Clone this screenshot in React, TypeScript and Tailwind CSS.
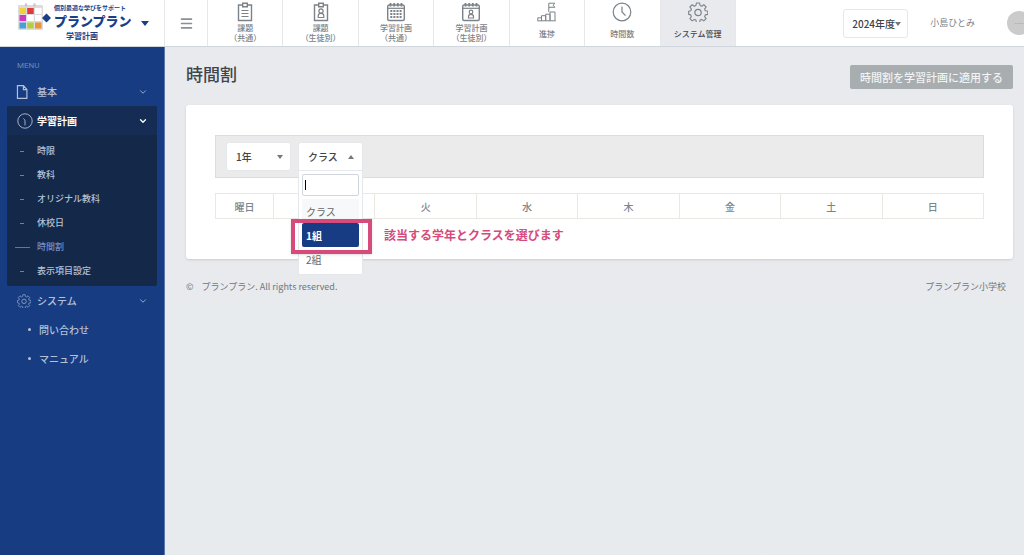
import { useState } from 'react';
import type { ReactNode } from 'react';
import { ChevronDown, Menu } from 'lucide-react';
import { clsx } from 'clsx';

const DAYS = ['月', '火', '水', '木', '金', '土', '日'];

const SUB_ITEMS = ['時限', '教科', 'オリジナル教科', '休校日', '時間割', '表示項目設定'];

const LINKS = ['問い合わせ', 'マニュアル'];

const CLASS_OPTIONS = ['クラス', '1組', '2組'];

function Icon({ size = 20, className, children }: { size?: number; className?: string; children: ReactNode }) {
  return (
    <svg
      width={size}
      height={size}
      viewBox="0 0 20 20"
      fill="none"
      stroke="currentColor"
      strokeWidth="1.2"
      className={clsx('shrink-0', className)}
      aria-hidden="true"
    >
      {children}
    </svg>
  );
}

const ClipboardIcon = () => (
  <Icon>
    <path d="M7.5 3H3.5v15.5h13V3h-4" strokeWidth="1.4" />
    <path d="M7.7 1.2h4.6v3.6H7.7z" strokeWidth="1.4" />
    <path d="M6.5 8.5h7M6.5 11.5h7M6.5 14.5h7" />
  </Icon>
);

const ClipboardUserIcon = () => (
  <Icon>
    <path d="M7.5 3H3.5v15.5h13V3h-4" strokeWidth="1.4" />
    <path d="M7.7 1.2h4.6v3.6H7.7z" strokeWidth="1.4" />
    <circle cx="10" cy="9" r="2.1" />
    <path d="M7.2 15.5v-1.7c0-1.5 1-2.4 2.8-2.4s2.8.9 2.8 2.4v1.7z" />
  </Icon>
);

const CalendarIcon = () => (
  <Icon>
    <rect x="1.7" y="3" width="16.6" height="15.5" rx="1.5" strokeWidth="1.4" />
    <path d="M2 6.3h16" />
    <path d="M4.5 1v3.5M8.2 1v3.5M11.8 1v3.5M15.5 1v3.5" strokeWidth="1.8" />
    <path d="M4.3 9h11.4M4.3 12h11.4M4.3 15h11.4" strokeWidth="2" strokeDasharray="2 1.1" />
  </Icon>
);

const CalendarUserIcon = () => (
  <Icon>
    <rect x="1.7" y="3" width="16.6" height="15.5" rx="1.5" strokeWidth="1.4" />
    <path d="M2 6.3h16" />
    <path d="M4.5 1v3.5M8.2 1v3.5M11.8 1v3.5M15.5 1v3.5" strokeWidth="1.8" />
    <circle cx="10" cy="10" r="1.8" />
    <path d="M7.5 16v-1.5c0-1.4.9-2.2 2.5-2.2s2.5.8 2.5 2.2V16z" />
  </Icon>
);

const StepsIcon = () => (
  <Icon>
    <path d="M.8 18.7v-2.9h3.7v2.9M4.5 18.7v-5h4.2v5M8.7 18.7v-6.5h4.3v6.5M13 18.7V10h5v8.7" strokeWidth="1" />
    <path d="M.3 18.8h18.4" strokeWidth="1" />
    <path d="M11.8 10V1.2h6l-1.6 2 1.6 2.1h-6" strokeWidth="1" />
  </Icon>
);

const ClockIcon = () => (
  <Icon>
    <circle cx="10" cy="10" r="8.8" />
    <path d="M10 4.5V10l3.5 3.7" />
  </Icon>
);

const GearIcon = ({ size = 20, className }: { size?: number; className?: string }) => (
  <Icon size={size} className={className}>
    <path
      d="M8.4 1h3.2l.5 2.5 1.6.7 2.1-1.5 2.3 2.3-1.5 2.1.7 1.6 2.5.5v3.2l-2.5.5-.7 1.6 1.5 2.1-2.3 2.3-2.1-1.5-1.6.7-.5 2.5H8.4l-.5-2.5-1.6-.7-2.1 1.500-2.300-2.300 1.500-2.100-.700-1.600L.7 12.400V9.200l2-.500.700-1.600L1.900 5l2.300-2.300 2.100 1.500 1.600-.700z"
      strokeLinejoin="round"
      strokeWidth="1.1"
    />
    <circle cx="10" cy="10.500" r="3.200" />
  </Icon>
);

const TABS = [
  { lines: ['課題', '（共通）'], icon: ClipboardIcon },
  { lines: ['課題', '（生徒別）'], icon: ClipboardUserIcon },
  { lines: ['学習計画', '（共通）'], icon: CalendarIcon },
  { lines: ['学習計画', '（生徒別）'], icon: CalendarUserIcon },
  { lines: ['進捗'], icon: StepsIcon },
  { lines: ['時間数'], icon: ClockIcon },
  { lines: ['システム管理'], icon: GearIcon },
];

function Caret({ up, className }: { up?: boolean; className?: string }) {
  return (
    <svg width="6" height="4" viewBox="0 0 6 4" className={className} aria-hidden="true">
      <path d={up ? 'M0 4h6L3 0z' : 'M0 0h6L3 4z'} fill="currentColor" />
    </svg>
  );
}

function Logo() {
  return (
    <a href="#" className="flex h-full w-[165px] shrink-0 items-start border-r border-gray-200 pl-[18px] text-[#1a3f87]">
      <svg width="33" height="31" viewBox="0 0 33 31" className="mt-[2px] shrink-0" aria-hidden="true">
        <rect x="0" y="3" width="25" height="25" rx="1" fill="#dcdcde" />
        <g fill="#fff">
          <rect x="17" y="6" width="6.5" height="6" />
          <rect x="9.2" y="13" width="6.5" height="6" />
          <rect x="17" y="13" width="6.5" height="6" />
        </g>
        <rect x="1.5" y="6" width="6.5" height="6" fill="#f2d03e" />
        <rect x="9.2" y="6" width="6.5" height="6" fill="#df3b3b" />
        <rect x="1.5" y="13" width="6.5" height="6" fill="#cf38c0" />
        <rect x="1.5" y="20.5" width="6.5" height="6" fill="#4a9fd8" />
        <rect x="9.2" y="20.5" width="6.5" height="6" fill="#b4cf3c" />
        <rect x="17" y="20.5" width="6.5" height="6" fill="#ec9238" />
        <path d="M8 2.500v1M16.500 2.500v1" stroke="#c9c9cc" strokeWidth="2.5" strokeLinecap="round" />
        <path d="M28.500 11.500 33 16l-4.500 4.500L24 16z" fill="#1a3f87" />
      </svg>
      <span className="flex flex-col pl-[3px] pt-1 font-bold">
        <span className="text-[6px] leading-[8px]">個別最適な学びをサポート</span>
        <span className="text-[13px] font-black leading-[18px]">プランプラン</span>
        <span className="pl-3 text-[8px] leading-[12px]">学習計画</span>
      </span>
      <svg width="8" height="5" viewBox="0 0 8 5" className="ml-[9px] mt-[21px] shrink-0" aria-hidden="true">
        <path d="M0 0h8L4 5z" fill="currentColor" />
      </svg>
    </a>
  );
}

function Header() {
  return (
    <header className="relative z-10 flex h-[47px] items-center overflow-hidden border-b border-gray-300 bg-white text-[#7b8288]">
      <Logo />
      <button type="button" aria-label="メニュー" className="flex h-full w-[42px] shrink-0 items-center justify-center">
        <Menu size={15} strokeWidth={2.5} className="text-[#8a9096]" />
      </button>
      <nav className="flex h-full w-[529px] shrink-0">
        {TABS.map(({ lines, icon: TabIcon }, i) => {
          const active = i === TABS.length - 1;
          return (
            <a
              key={lines.join('')}
              href="#"
              className={clsx(
                'flex flex-1 flex-col items-center border-l border-gray-200 pt-[2px]',
                active && 'border-r bg-[#e9eaee]'
              )}
            >
              <TabIcon />
              <span
                className={clsx(
                  'flex flex-1 flex-col items-center text-[8px] font-medium leading-[10px]',
                  lines.length === 1 ? 'pt-[7px]' : 'pt-[1px]',
                  active && 'font-bold text-[#454b52]'
                )}
              >
                {lines.map((line) => (
                  <span key={line}>{line}</span>
                ))}
              </span>
            </a>
          );
        })}
      </nav>
      <div className="-mr-[7px] ml-auto flex shrink-0 items-center">
        <div className="relative">
          <select
            aria-label="年度"
            className="h-[29px] w-[65px] appearance-none rounded-[3px] border border-gray-200 bg-white pl-2 text-[10px] font-medium text-[#3c4248]"
          >
            <option>2024年度</option>
          </select>
          <Caret className="pointer-events-none absolute right-[7px] top-[13px] text-[#777]" />
        </div>
        <span className="ml-[22px] text-[9px]">小島ひとみ</span>
        <span className="ml-[32px] flex size-6 items-center justify-center rounded-full bg-[#cbcbcb] text-[9px] text-[#aaa]">---</span>
      </div>
    </header>
  );
}

function Sidebar() {
  return (
    <aside className="w-[165px] shrink-0 border-r border-[#5d78ad] bg-[#183c82] text-[10px] font-medium text-[#b5c0d5]">
      <p className="flex h-[30px] items-center pl-[17px] pt-2 font-['Roboto'] text-[8px] font-normal text-[#7187b2]">MENU</p>
      <nav>
        <a href="#" className="flex h-[29px] items-center pl-[15px] pr-4">
          <Icon size={14}>
            <path d="M3.5 1h8.500l5 5.500V19h-13.500zM12 1v5.500h5" strokeWidth="1.7" />
          </Icon>
          <span className="flex-1 pl-2">基本</span>
          <ChevronDown size={10} />
        </a>
        <div className="mx-[7px] rounded-[2px] bg-[#142849]">
          <a href="#" className="flex h-[29px] items-center bg-[#152d55] pl-[10px] pr-[9px] font-bold text-white">
            <Icon size={16} className="text-[#aab6ca]">
              <circle cx="10" cy="10" r="9" />
              <path d="M8 7l2 2v6.5" />
            </Icon>
            <span className="flex-1 pl-1">学習計画</span>
            <ChevronDown size={10} strokeWidth={3} />
          </a>
          <ul className="pb-[3px] pt-1 text-[9px]">
            {SUB_ITEMS.map((item) => {
              const current = item === '時間割';
              return (
                <li key={item}>
                  <a href="#" className={clsx('flex h-6 items-center', current && 'text-[#748dc4]')}>
                    <span className="flex w-[30px] justify-center">
                      <span className={clsx('h-px', current ? 'w-[15px] bg-[#5f76a8]' : 'w-1 bg-[#70809d]')} />
                    </span>
                    {item}
                  </a>
                </li>
              );
            })}
          </ul>
        </div>
        <a href="#" className="flex h-[29px] items-center pl-[17px] pr-4">
          <GearIcon size={14} className="text-[#8fa1c4]" />
          <span className="flex-1 pl-[6px]">システム</span>
          <ChevronDown size={10} />
        </a>
        {LINKS.map((item) => (
          <a key={item} href="#" className="flex h-[29px] items-center gap-2 pl-7">
            <span className="size-[3px] rounded-full bg-[#b5c0d5]" />
            {item}
          </a>
        ))}
      </nav>
    </aside>
  );
}

function ClassSelect({ open, onOpenChange }: { open: boolean; onOpenChange: (open: boolean) => void }) {
  const [selected, setSelected] = useState('クラス');

  return (
    <div className="relative w-[65px]">
      <button
        type="button"
        aria-haspopup="listbox"
        aria-expanded={open}
        onClick={() => onOpenChange(!open)}
        className="flex h-[29px] w-full items-center justify-between rounded-t-[3px] border border-gray-200 bg-white pl-[9px] pr-2 text-[10px] font-medium text-[#444]"
      >
        {selected}
        <Caret up={open} className="text-[#777]" />
      </button>
      {open && (
        <div className="absolute inset-x-0 top-[28px] z-20 border border-gray-200 bg-white p-[3px] text-[10px] text-[#666]">
          <div className="relative">
            <input
              type="text"
              aria-label="クラスを検索"
              className="block h-[22px] w-full rounded-[2px] border border-gray-300 px-1 outline-none"
            />
            <span className="pointer-events-none absolute left-[3px] top-[6px] h-[10px] w-px bg-black" />
          </div>
          <ul role="listbox" aria-label="クラス" className="pt-[3px]">
            {CLASS_OPTIONS.map((option) => (
              <li
                key={option}
                role="option"
                aria-selected={option === selected}
                onClick={() => {
                  setSelected(option);
                  onOpenChange(false);
                }}
                className={clsx(
                  'relative flex h-6 items-center rounded-[2px] pl-1',
                  option === 'クラス' && 'bg-[#f7f8fa]',
                  option === '1組' && 'bg-[#173c84] font-bold text-white'
                )}
              >
                {option}
                {option === '1組' && (
                  <>
                    <span className="absolute -bottom-[7px] -left-[11px] -right-[13px] -top-1 border-4 border-[#d64a7c] shadow-sm" />
                    <span className="absolute left-full whitespace-nowrap pl-[25px] text-[12px] font-bold text-[#d64a7c]">
                      該当する学年とクラスを選びます
                    </span>
                  </>
                )}
              </li>
            ))}
          </ul>
        </div>
      )}
    </div>
  );
}

export default function App() {
  const [classOpen, setClassOpen] = useState(true);

  return (
    <div
      lang="ja"
      className="flex min-h-screen flex-col bg-linear-to-b from-[#e9eaef] to-[#e7ebed] font-['Noto_Sans_CJK_JP',sans-serif]"
    >
      <Header />
      <div className="flex flex-1">
        <Sidebar />
        <main className="min-w-0 flex-1 pl-[21px] pr-[11px] pt-[18px]">
          <div className="flex h-6 items-center justify-between">
            <h1 className="pb-1.5 text-[17px] font-medium text-[#3f454b]">時間割</h1>
            <button type="button" className="h-6 rounded-[2px] bg-[#a8adb0] px-[10px] text-[11px] font-medium text-[#f1f3f4]">
              時間割を学習計画に適用する
            </button>
          </div>

          <section className="mt-4 rounded-[3px] bg-white px-[29px] pb-10 pt-[30px] shadow-sm">
            <div className="flex gap-[7px] border border-[#dcdcdc] bg-[#ebebeb] px-[10px] py-1.5">
              <div className="relative">
                <select
                  aria-label="学年"
                  className="block h-[29px] w-[65px] appearance-none rounded-[3px] border border-gray-200 bg-white pl-[9px] text-[10px] font-medium text-[#444]"
                >
                  <option>1年</option>
                </select>
                <Caret className="pointer-events-none absolute right-2 top-[13px] text-[#777]" />
              </div>
              <ClassSelect open={classOpen} onOpenChange={setClassOpen} />
            </div>

            <table className="mt-[15px] w-full table-fixed border-collapse text-[10px] text-[#7c858c]">
              <thead>
                <tr className="h-[25px]">
                  <th className="w-[58px] border border-[#e9e9e4] font-medium">曜日</th>
                  {DAYS.map((day, i) => (
                    <th key={day} className="border border-[#e9e9e4] font-medium">
                      {/* the open menu covers the first day */}
                      {classOpen && i === 0 ? null : day}
                    </th>
                  ))}
                </tr>
              </thead>
            </table>
          </section>

          <footer className="mt-5 flex justify-between pr-[7px] text-[9px] leading-4 text-[#70757a]">
            <p className="flex gap-2">
              <span>©</span>
              <span>プランプラン. All rights reserved.</span>
            </p>
            <p>プランプラン小学校</p>
          </footer>
        </main>
      </div>
    </div>
  );
}
